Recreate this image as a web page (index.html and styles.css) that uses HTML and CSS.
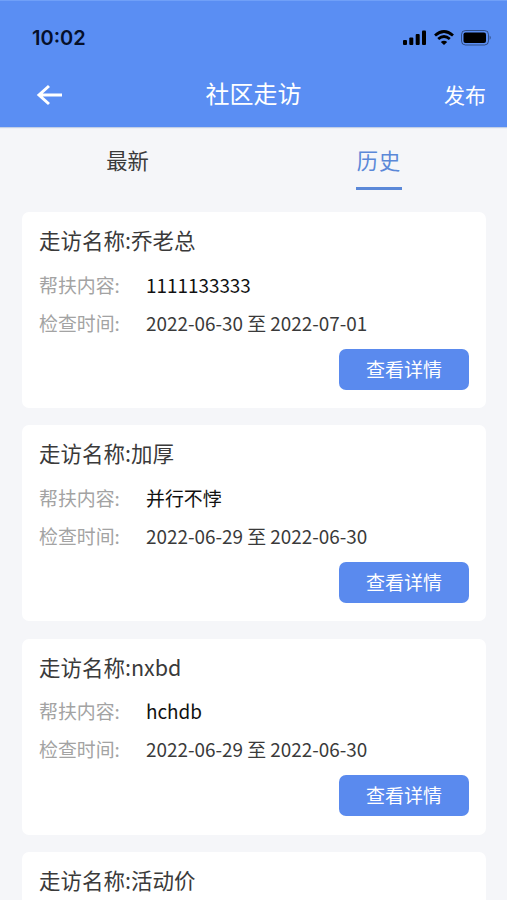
FILE: index.html
```html
<!DOCTYPE html>
<html lang="zh-CN">
<head>
    <meta charset="UTF-8">
    <meta name="viewport" content="width=device-width, initial-scale=1.0">
    <title>社区走访</title>
    <link rel="stylesheet" href="styles.css">
</head>
<body>
    <header class="header">
        <div class="status-bar">
            <span class="time">10:02</span>
            <div class="status-icons">
                <svg class="signal" viewBox="0 0 24 16" width="24" height="16">
                    <rect x="0" y="10" width="4" height="5" rx="1"/>
                    <rect x="6.300" y="7.500" width="4" height="7.500" rx="1"/>
                    <rect x="12.700" y="4" width="4" height="11" rx="1"/>
                    <rect x="19" y="0.500" width="4" height="14.500" rx="1"/>
                </svg>
                <svg class="wifi" viewBox="0 0 20 16" width="20" height="16">
                    <path d="M1 5.500Q10 -2.500 19 5.500" fill="none" stroke="#000" stroke-width="2.800"/>
                    <path d="M4.200 9Q10 4 15.800 9" fill="none" stroke="#000" stroke-width="2.800"/>
                    <path d="M6.800 12Q10 9.400 13.200 12L10 15Z"/>
                </svg>
                <svg class="battery" viewBox="0 0 31 16" width="31" height="16">
                    <rect x="0.500" y="0.500" width="27" height="14.500" rx="4" fill="none" stroke="#000" stroke-opacity="0.450"/>
                    <rect x="2.500" y="2.500" width="22.500" height="10.500" rx="2"/>
                    <path d="M28.700 5.500Q30.700 7.700 28.700 10Z" fill-opacity="0.500"/>
                </svg>
            </div>
        </div>
        <nav class="nav-bar">
            <a href="#" class="back" title="返回">
                <svg viewBox="0 0 28 22" width="28" height="22">
                    <path d="M13 2L3 11L13 20M3 11H26" fill="none" stroke="#fff" stroke-width="3"/>
                </svg>
            </a>
            <h1 class="title">社区走访</h1>
            <a href="#" class="publish">发布</a>
        </nav>
    </header>
    <div class="tabs">
        <a href="#" class="tab"><span>最新</span></a>
        <a href="#" class="tab active"><span>历史</span></a>
    </div>
    <div class="list">
        <div class="card">
            <h2 class="name">走访名称:乔老总</h2>
            <div class="row"><span class="label">帮扶内容:</span><span class="content">1111133333</span></div>
            <div class="row"><span class="label">检查时间:</span><span class="date">2022-06-30 至 2022-07-01</span></div>
            <a href="#" class="detail">查看详情</a>
        </div>
        <div class="card">
            <h2 class="name">走访名称:加厚</h2>
            <div class="row"><span class="label">帮扶内容:</span><span class="content">并行不悖</span></div>
            <div class="row"><span class="label">检查时间:</span><span class="date">2022-06-29 至 2022-06-30</span></div>
            <a href="#" class="detail">查看详情</a>
        </div>
        <div class="card">
            <h2 class="name">走访名称:nxbd</h2>
            <div class="row"><span class="label">帮扶内容:</span><span class="content">hchdb</span></div>
            <div class="row"><span class="label">检查时间:</span><span class="date">2022-06-29 至 2022-06-30</span></div>
            <a href="#" class="detail">查看详情</a>
        </div>
        <div class="card last">
            <h2 class="name">走访名称:活动价</h2>
        </div>
    </div>
</body>
</html>
```
FILE: styles.css
```css
* {
    box-sizing: border-box;
}

body {
    margin: 0;
    height: 900px;
    overflow: hidden;
    background: #f5f6f9;
    color: #3a3a3a;
    font-family: "Noto Sans CJK SC", sans-serif;
}

a {
    color: inherit;
    text-decoration: none;
}

.header {
    height: 127px;
    border-top: 1px solid #70a0f8;
    background: #5a8ef3;
    box-shadow: 0 1px 1px #c3d0e6;
}

.status-bar {
    display: flex;
    justify-content: space-between;
    align-items: center;
    height: 61px;
    padding: 13px 15px 0 32px;
}

.time {
    color: #06102a;
    font-family: Inter, sans-serif;
    font-size: 20px;
    font-weight: 600;
}

.status-icons {
    display: flex;
    gap: 7px;
}

.nav-bar {
    display: grid;
    grid-template-columns: 90px 1fr 90px;
    align-items: center;
    height: 64px;
    color: #fff;
}

.back {
    display: flex;
    padding: 2px 0 0 36px;
}

.title {
    margin: 0 0 2px;
    font-size: 24px;
    font-weight: 400;
    line-height: 36px;
    text-align: center;
}

.publish {
    padding-right: 21px;
    font-size: 21px;
    text-align: right;
}

.tabs {
    display: flex;
    height: 85px;
}

.tab {
    width: 255px;
    font-size: 21.3px;
    line-height: 32px;
    text-align: center;
}

.tab span {
    display: inline-block;
    height: 46px;
    margin-top: 17px;
}

.active {
    width: 248px;
    color: #5b88d8;
}

.active span {
    width: 46px;
    border-bottom: 3px solid #5b88d8;
    letter-spacing: 1px;
}

.list {
    display: flex;
    flex-direction: column;
    gap: 17.3px;
    height: 688px;
    padding: 0 21px 0 22px;
    overflow: hidden;
}

.card {
    display: flex;
    flex-direction: column;
    flex-shrink: 0;
    height: 196px;
    padding: 12px 17px;
    border-radius: 7px;
    background: #fff;
}

.last {
    flex: 1;
    height: auto;
    padding-bottom: 0;
    border-radius: 7px 7px 0 0;
}

.name {
    margin: 0 0 9.8px;
    font-size: 21.5px;
    font-weight: 400;
    line-height: 32px;
}

.row {
    display: flex;
    height: 38px;
    font-size: 18.9px;
    line-height: 38px;
}

.label {
    width: 107px;
    color: #a3a3a3;
}

.content {
    color: #111;
}

.detail {
    align-self: flex-end;
    flex-shrink: 0;
    width: 130px;
    height: 41px;
    margin-top: 7px;
    border-radius: 7px;
    background: #5a8aee;
    color: #fff;
    font-size: 19px;
    line-height: 40px;
    text-align: center;
}
```
